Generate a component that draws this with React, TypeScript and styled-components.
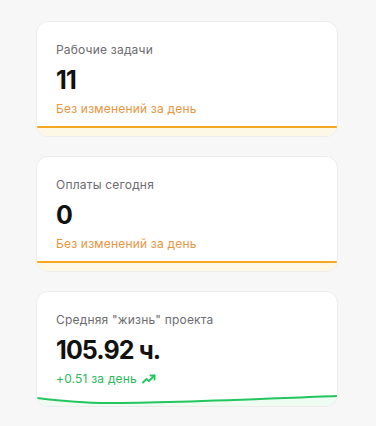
import React from "react";
import styled, { createGlobalStyle } from "styled-components";

const Global = createGlobalStyle`
  html, body { margin: 0; padding: 0; background: #f7f7f7; }
  body { font-family: Inter, "Noto Sans", sans-serif; }
`;

const Page = styled.div`
  display: flex;
  flex-direction: column;
  gap: 19px;
  padding: 21px 38px 0 36px;
  width: 302px;
`;

const Card = styled.div`
  height: 116px;
  box-sizing: border-box;
  background: #fff;
  border: 1px solid #ececec;
  border-radius: 12px;
  overflow: hidden;
  display: flex;
  flex-direction: column;
  padding: 19px 0 0 0;
`;

const Body = styled.div`
  display: flex;
  flex-direction: column;
  padding: 0 19px;
`;

const Title = styled.div`
  font-size: 12px;
  line-height: 18px;
  color: #6b6b70;
  letter-spacing: 0.2px;
`;

const Value = styled.div`
  margin-top: 6px;
  font-size: 25px;
  line-height: 30px;
  font-weight: 700;
  letter-spacing: -0.9px;
  color: #111;
`;

const Sub = styled.div<{ $tone: "orange" | "green" }>`
  margin-top: 6px;
  display: flex;
  align-items: center;
  gap: 5px;
  font-size: 12px;
  line-height: 16px;
  letter-spacing: 0.2px;
  color: ${(p) => (p.$tone === "orange" ? "#e8953f" : "#2bb85c")};
`;

const Chart = styled.svg`
  display: block;
  margin-top: auto;
  width: 100%;
  height: 16px;
`;

const TrendIcon = () => (
  <svg width="14" height="10" viewBox="0 0 14 10" fill="none" stroke="#22c55e" strokeWidth="1.8" strokeLinecap="round" strokeLinejoin="round">
    <polyline points="1,8.5 4.5,5 7,7 12.5,1.5" />
    <polyline points="8.5,1.5 12.5,1.5 12.5,5.5" />
  </svg>
);

const FlatChart = () => (
  <Chart viewBox="0 0 300 16" preserveAspectRatio="none">
    <rect x="0" y="7" width="300" height="9" fill="#fdf8e6" />
    <line x1="0" y1="7" x2="300" y2="7" stroke="#f5a623" strokeWidth="2" />
  </Chart>
);

const GreenChart = () => (
  <Chart viewBox="0 0 300 16" preserveAspectRatio="none">
    <path d="M0,8 C25,11 45,13 70,13 C140,13 220,9 300,6 L300,16 L0,16 Z" fill="#effcf2" />
    <path d="M0,8 C25,11 45,13 70,13 C140,13 220,9 300,6" fill="none" stroke="#22c55e" strokeWidth="2" />
  </Chart>
);

export default function App() {
  return (
    <>
      <Global />
      <Page>
        <Card>
          <Body>
            <Title>Рабочие задачи</Title>
            <Value>11</Value>
            <Sub $tone="orange">Без изменений за день</Sub>
          </Body>
          <FlatChart />
        </Card>
        <Card>
          <Body>
            <Title>Оплаты сегодня</Title>
            <Value>0</Value>
            <Sub $tone="orange">Без изменений за день</Sub>
          </Body>
          <FlatChart />
        </Card>
        <Card>
          <Body>
            <Title>Средняя "жизнь" проекта</Title>
            <Value>105.92 ч.</Value>
            <Sub $tone="green">
              +0.51 за день <TrendIcon />
            </Sub>
          </Body>
          <GreenChart />
        </Card>
      </Page>
    </>
  );
}
